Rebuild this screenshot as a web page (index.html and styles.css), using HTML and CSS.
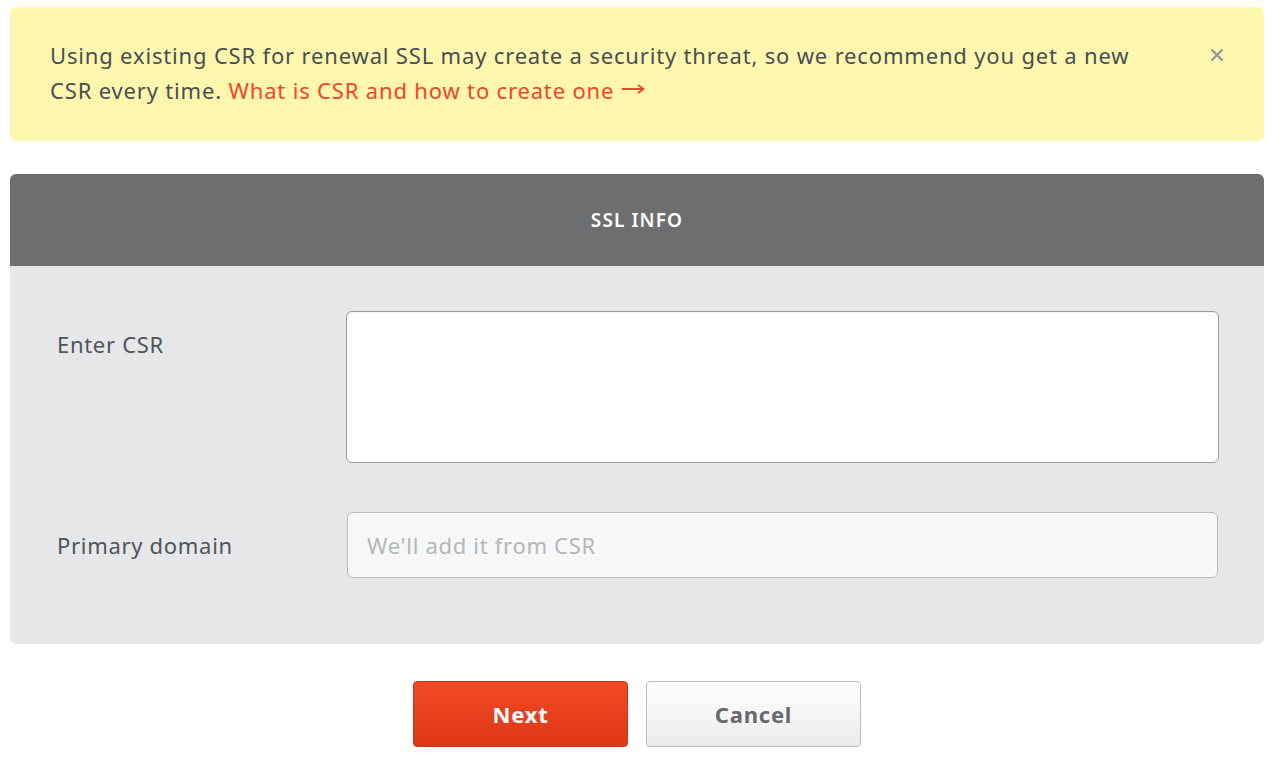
FILE: index.html
```html
<!DOCTYPE html>
<html lang="en">
<head>
<meta charset="utf-8">
<title>SSL Info</title>
<link rel="stylesheet" href="styles.css">
</head>
<body>
<div class="page">
  <div class="alert">
    <p class="alert-text">Using existing CSR for renewal SSL may create a security threat, so we recommend you get a new CSR every time. <a class="alert-link" href="#">What is CSR and how to create one<svg class="arrow" width="23" height="10" viewBox="0 0 23 10" aria-hidden="true"><path d="M0 5 H21" stroke="#f3452a" stroke-width="2" fill="none"/><path d="M16 1 L21.5 5 L16 9" stroke="#f3452a" stroke-width="1.8" fill="none"/></svg></a></p>
    <button class="alert-close" type="button" aria-label="Close">
      <svg width="14" height="14" viewBox="0 0 14 14"><path d="M1.5 1.5 L12.5 12.5 M12.5 1.5 L1.5 12.5" stroke="#8b959a" stroke-width="2.2" fill="none"/></svg>
    </button>
  </div>

  <section class="panel">
    <header class="panel-head">SSL INFO</header>
    <div class="panel-body">
      <div class="row">
        <label class="row-label">Enter CSR</label>
        <textarea class="csr-input"></textarea>
      </div>
      <div class="row">
        <label class="row-label">Primary domain</label>
        <input class="domain-input" type="text" placeholder="We'll add it from CSR">
      </div>
    </div>
  </section>

  <div class="actions">
    <button class="btn btn-primary" type="button">Next</button>
    <button class="btn btn-default" type="button">Cancel</button>
  </div>
</div>
</body>
</html>
```
FILE: styles.css
```css
* { box-sizing: border-box; }
html, body { margin: 0; padding: 0; background: #fff; }
body {
  font-family: "Noto Sans", "Open Sans", sans-serif;
  color: #4a4f55;
}
.page {
  padding: 7px 21px 0 10px;
}
.alert {
  display: flex;
  align-items: flex-start;
  background: #fff7ae;
  border-radius: 6px;
  padding: 31px 40px 32px 40px;
  height: 134px;
}
.alert-text {
  margin: 0;
  flex: 1;
  font-size: 22px;
  letter-spacing: 0.83px;
  line-height: 35px;
  color: #484e54;
  padding-right: 50px;
}
.alert-link {
  color: #f3452a;
  text-decoration: none;
}
.arrow {
  display: inline-block;
  margin-left: 8px;
  vertical-align: 5px;
}
.alert-close {
  border: 0;
  background: none;
  padding: 0;
  margin-top: 10px;
  width: 14px;
  height: 14px;
  cursor: pointer;
  display: block;
}
.alert-close svg { display: block; }

.panel {
  margin-top: 33px;
  border-radius: 6px;
  overflow: hidden;
  background: #e6e7e9;
}
.panel-head {
  height: 92px;
  background: #6d6e70;
  color: #fff;
  display: flex;
  align-items: center;
  justify-content: center;
  font-size: 19px;
  font-weight: 600;
  letter-spacing: 1.1px;
}
.panel-body {
  padding: 45px 45px 66px 47px;
  display: flex;
  flex-direction: column;
  gap: 49px;
}
.row {
  display: flex;
  align-items: flex-start;
}
.row-label {
  width: 289px;
  flex: none;
  height: 66px;
  display: flex;
  align-items: center;
  font-size: 22px;
  letter-spacing: 0.7px;
  color: #4f545a;
}
.csr-input {
  flex: 1;
  height: 152px;
  border: 1px solid #9a9c9e;
  border-radius: 6px;
  background: #fff;
  resize: none;
  font: inherit;
  margin: 0;
  box-shadow: inset 0 1px 1px rgba(0,0,0,0.05);
}
.domain-input {
  flex: 1;
  height: 66px;
  margin: 0 1px 0 1px;
  border: 1px solid #bbbcbe;
  border-radius: 6px;
  background: #f6f7f7;
  font-family: inherit;
  font-size: 22px;
  letter-spacing: 0.7px;
  padding: 0 19px;
  color: #4a4f55;
}
.domain-input::placeholder { color: #b4b6b7; }

.actions {
  display: flex;
  justify-content: center;
  gap: 18px;
  margin-top: 37px;
}
.btn {
  width: 215px;
  height: 66px;
  border-radius: 4px;
  font-family: inherit;
  font-size: 22px;
  font-weight: 700;
  letter-spacing: 0.8px;
  cursor: pointer;
}
.btn-primary {
  background: linear-gradient(#f24a25, #de3717);
  border: 1px solid #cf3515;
  color: #fff;
}
.btn-default {
  background: linear-gradient(#ffffff, #ebebeb);
  border: 1px solid #bdbdbd;
  color: #66696c;
}
```
